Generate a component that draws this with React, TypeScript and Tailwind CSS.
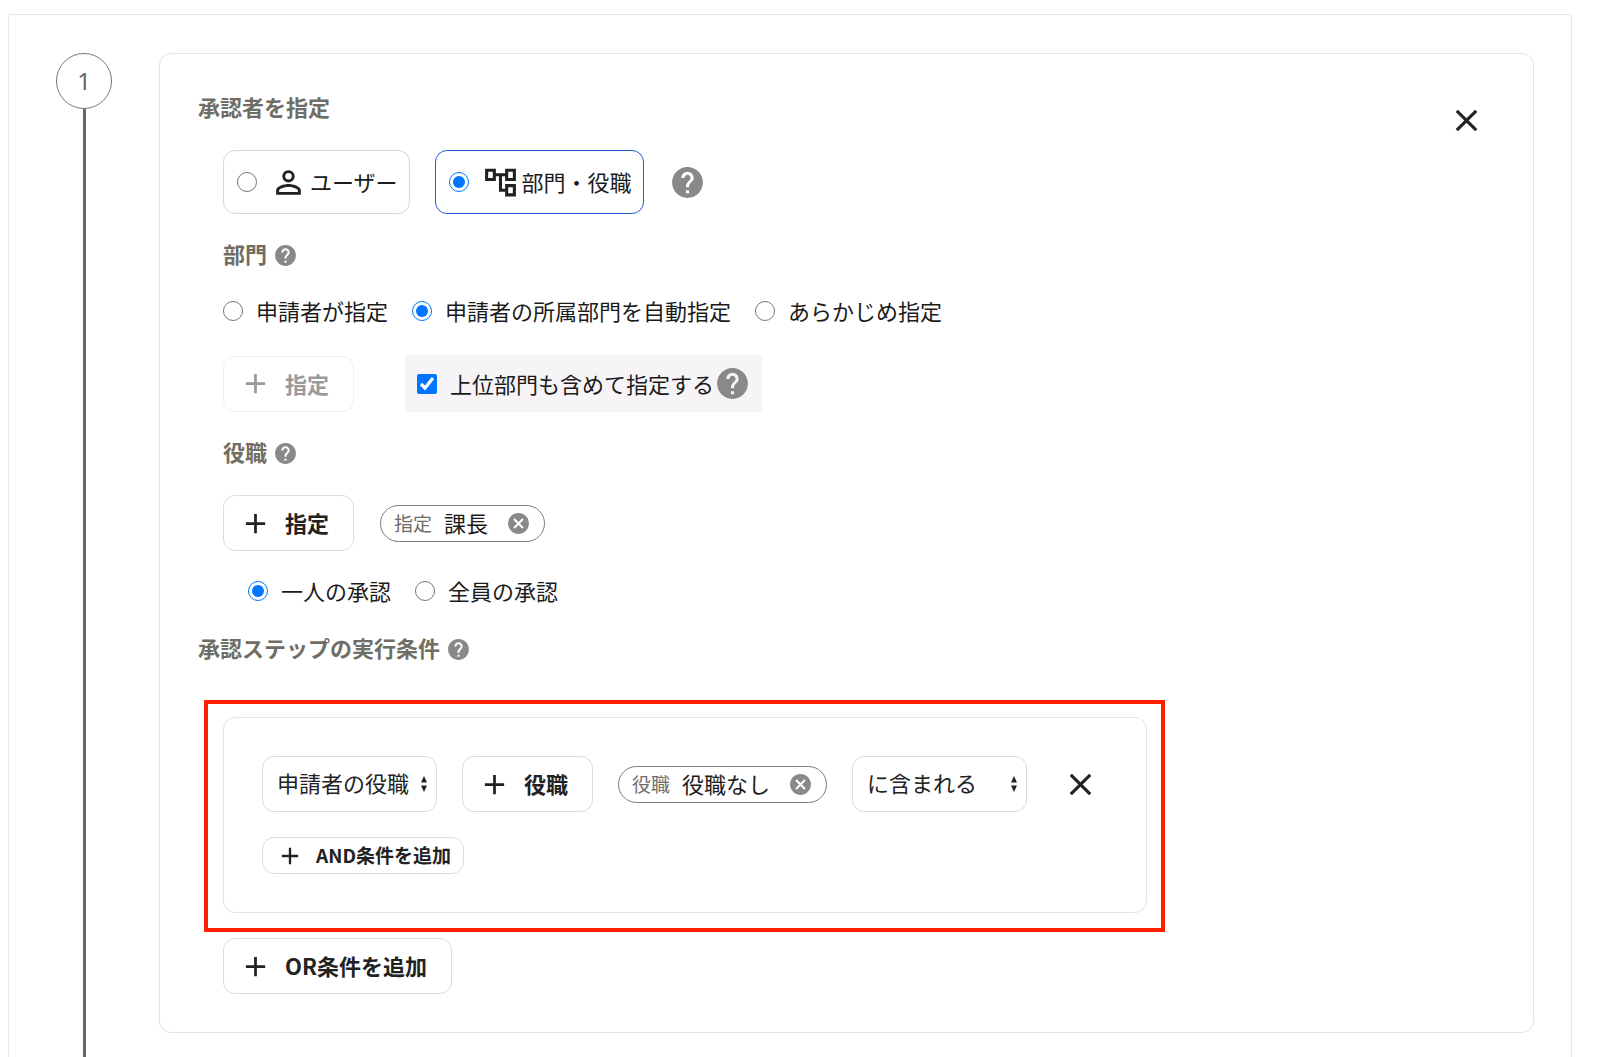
import { useState, type ReactNode } from 'react'
import {
  MdAdd,
  MdCancel,
  MdClose,
  MdHelp,
  MdOutlineAccountTree,
  MdPersonOutline,
} from 'react-icons/md'

type ApproverType = 'user' | 'department'
type DepartmentMode = 'applicant' | 'auto' | 'preset'

const departmentModes: { value: DepartmentMode; label: string }[] = [
  { value: 'applicant', label: '申請者が指定' },
  { value: 'auto', label: '申請者の所属部門を自動指定' },
  { value: 'preset', label: 'あらかじめ指定' },
]

// CJK glyphs sit low in their line box, the bottom padding centres them
function Text({ children }: { children: ReactNode }) {
  return <span className="pb-[2px] leading-[30px]">{children}</span>
}

function HelpButton({ large = false }: { large?: boolean }) {
  return (
    <button type="button" aria-label="ヘルプ" className="shrink-0 text-[#8b8987]">
      <MdHelp className={large ? 'size-[37px]' : 'size-[25px]'} />
    </button>
  )
}

function SectionTitle({ children, help = true }: { children: ReactNode; help?: boolean }) {
  return (
    <div className="flex items-center gap-[6px]">
      <h2 className="pb-1 font-bold leading-7 text-[#706d65]">{children}</h2>
      {help && <HelpButton />}
    </div>
  )
}

interface RadioProps {
  name: string
  label: string
  checked: boolean
  onChange: () => void
}

function Radio({ name, label, checked, onChange }: RadioProps) {
  return (
    <label className="flex items-center gap-[13px]">
      <input type="radio" name={name} checked={checked} onChange={onChange} className="size-5" />
      <Text>{label}</Text>
    </label>
  )
}

function RadioCard({ name, label, checked, onChange, icon }: RadioProps & { icon: ReactNode }) {
  return (
    <label
      className={`flex h-16 items-center rounded-xl border pl-[13px] pr-[11px] ${
        checked ? 'border-[#1f58d0]' : 'border-[#d9d5d7]'
      }`}
    >
      <input type="radio" name={name} checked={checked} onChange={onChange} className="size-5" />
      <span className="ml-[13px] mr-[3px] text-[#222]">{icon}</span>
      <Text>{label}</Text>
    </label>
  )
}

function AddButton({ label, disabled = false }: { label: string; disabled?: boolean }) {
  return (
    <button
      type="button"
      disabled={disabled}
      className="flex h-14 items-center gap-[13px] rounded-xl border border-[#dcdcdc] pl-[15px] pr-6 font-bold text-[#222] disabled:opacity-45"
    >
      <MdAdd className="size-[33px]" />
      <Text>{label}</Text>
    </button>
  )
}

function Chip({ kind, label }: { kind: string; label: string }) {
  return (
    <div className="flex h-[37px] items-center rounded-full border border-[#7d7b79] px-[13px]">
      <span className="mr-3 text-[19px] text-[#706d6b]">{kind}</span>
      <Text>{label}</Text>
      <button type="button" aria-label={`${label}を削除`} className="ml-[18px] text-[#8b8987]">
        <MdCancel className="size-[25px]" />
      </button>
    </div>
  )
}

function Select({ name, options }: { name: string; options: string[] }) {
  return (
    <div className="relative">
      <select
        aria-label={name}
        className="h-14 w-[175px] appearance-none rounded-xl border border-[#dcdcdc] bg-white pb-1 pl-[14px] pr-6 text-[#222]"
      >
        {options.map((option) => (
          <option key={option}>{option}</option>
        ))}
      </select>
      <svg
        viewBox="0 0 6 16"
        className="pointer-events-none absolute right-[10px] top-5 h-4 w-[6px] fill-[#222]"
      >
        <path d="M0 6.5 3 0l3 6.5zM0 9.5h6L3 16z" />
      </svg>
    </div>
  )
}

export default function App() {
  const [approverType, setApproverType] = useState<ApproverType>('department')
  const [departmentMode, setDepartmentMode] = useState<DepartmentMode>('auto')
  const [includeParents, setIncludeParents] = useState(true)
  const [approval, setApproval] = useState<'one' | 'all'>('one')

  return (
    <main className="bg-white pl-2 pr-7 pt-[14px] font-['Noto_Sans_CJK_JP',sans-serif] text-[22px] leading-8 text-[#1b1b1b]">
      <div className="flex gap-[47px] border-x border-t border-[#e8e8e8] pl-[47px] pr-[37px] pt-[38px]">
        {/* Step number and timeline */}
        <div className="flex shrink-0 flex-col items-center">
          <div className="flex size-14 items-center justify-center rounded-full border border-[#777] font-['Noto_Sans',sans-serif] text-2xl text-[#666]">
            1
          </div>
          <div className="w-[3px] grow bg-[#666]" />
        </div>

        <div className="min-w-0 grow pb-6">
          <section className="relative rounded-xl border border-[#e4e4e4] p-[38px]">
            <button
              type="button"
              aria-label="ステップを削除"
              className="absolute right-12 top-12 text-[#222]"
            >
              <MdClose className="size-[37px]" />
            </button>

            <SectionTitle help={false}>承認者を指定</SectionTitle>

            <div className="ml-[25px]">
              <div className="mt-[26px] flex items-center gap-[25px]">
                <RadioCard
                  name="approver"
                  label="ユーザー"
                  checked={approverType === 'user'}
                  onChange={() => setApproverType('user')}
                  icon={<MdPersonOutline className="size-[37px]" />}
                />
                <RadioCard
                  name="approver"
                  label="部門・役職"
                  checked={approverType === 'department'}
                  onChange={() => setApproverType('department')}
                  icon={<MdOutlineAccountTree className="size-[37px]" />}
                />
                <HelpButton large />
              </div>

              {/* Department */}
              <div className="mt-[25px]">
                <SectionTitle>部門</SectionTitle>
              </div>
              <div className="mt-6 flex gap-6">
                {departmentModes.map((mode) => (
                  <Radio
                    key={mode.value}
                    name="department"
                    label={mode.label}
                    checked={departmentMode === mode.value}
                    onChange={() => setDepartmentMode(mode.value)}
                  />
                ))}
              </div>
              <div className="mt-7 flex items-center gap-[51px]">
                <AddButton label="指定" disabled />
                <div className="flex h-[57px] items-center bg-[#f6f4f6] pl-3 pr-[11px]">
                  <label className="flex items-center gap-[13px]">
                    <input
                      type="checkbox"
                      checked={includeParents}
                      onChange={(e) => setIncludeParents(e.target.checked)}
                      className="size-5"
                    />
                    <Text>上位部門も含めて指定する</Text>
                  </label>
                  <HelpButton large />
                </div>
              </div>

              {/* Position */}
              <div className="mt-[25px]">
                <SectionTitle>役職</SectionTitle>
              </div>
              <div className="mt-[26px] flex items-center gap-[26px]">
                <AddButton label="指定" />
                <Chip kind="指定" label="課長" />
              </div>
              <div className="ml-[25px] mt-6 flex gap-6">
                <Radio
                  name="approval"
                  label="一人の承認"
                  checked={approval === 'one'}
                  onChange={() => setApproval('one')}
                />
                <Radio
                  name="approval"
                  label="全員の承認"
                  checked={approval === 'all'}
                  onChange={() => setApproval('all')}
                />
              </div>
            </div>

            {/* Step conditions */}
            <div className="mt-[26px]">
              <SectionTitle>承認ステップの実行条件</SectionTitle>
            </div>
            <div className="ml-[6px] mt-[35px] max-w-[961px] border-4 border-[#ff1e00] pb-[15px] pl-[15px] pr-[14px] pt-[13px]">
              <div className="rounded-xl border border-[#e4e4e4] p-[38px]">
                <div className="flex items-center gap-[25px]">
                  <Select name="対象" options={['申請者の役職', '申請者の部門']} />
                  <AddButton label="役職" />
                  <Chip kind="役職" label="役職なし" />
                  <Select name="比較" options={['に含まれる', 'に含まれない']} />
                  <button type="button" aria-label="条件を削除" className="ml-[10px] text-[#222]">
                    <MdClose className="size-[37px]" />
                  </button>
                </div>
                <button
                  type="button"
                  className="mt-[25px] flex h-[37px] items-center gap-3 rounded-xl border border-[#dcdcdc] pl-[13px] pr-3 text-[19px] font-bold text-[#222]"
                >
                  <MdAdd className="size-7" />
                  <Text>AND条件を追加</Text>
                </button>
              </div>
            </div>
            <div className="ml-[25px] mt-[6px] flex">
              <AddButton label="OR条件を追加" />
            </div>
          </section>
        </div>
      </div>
    </main>
  )
}
